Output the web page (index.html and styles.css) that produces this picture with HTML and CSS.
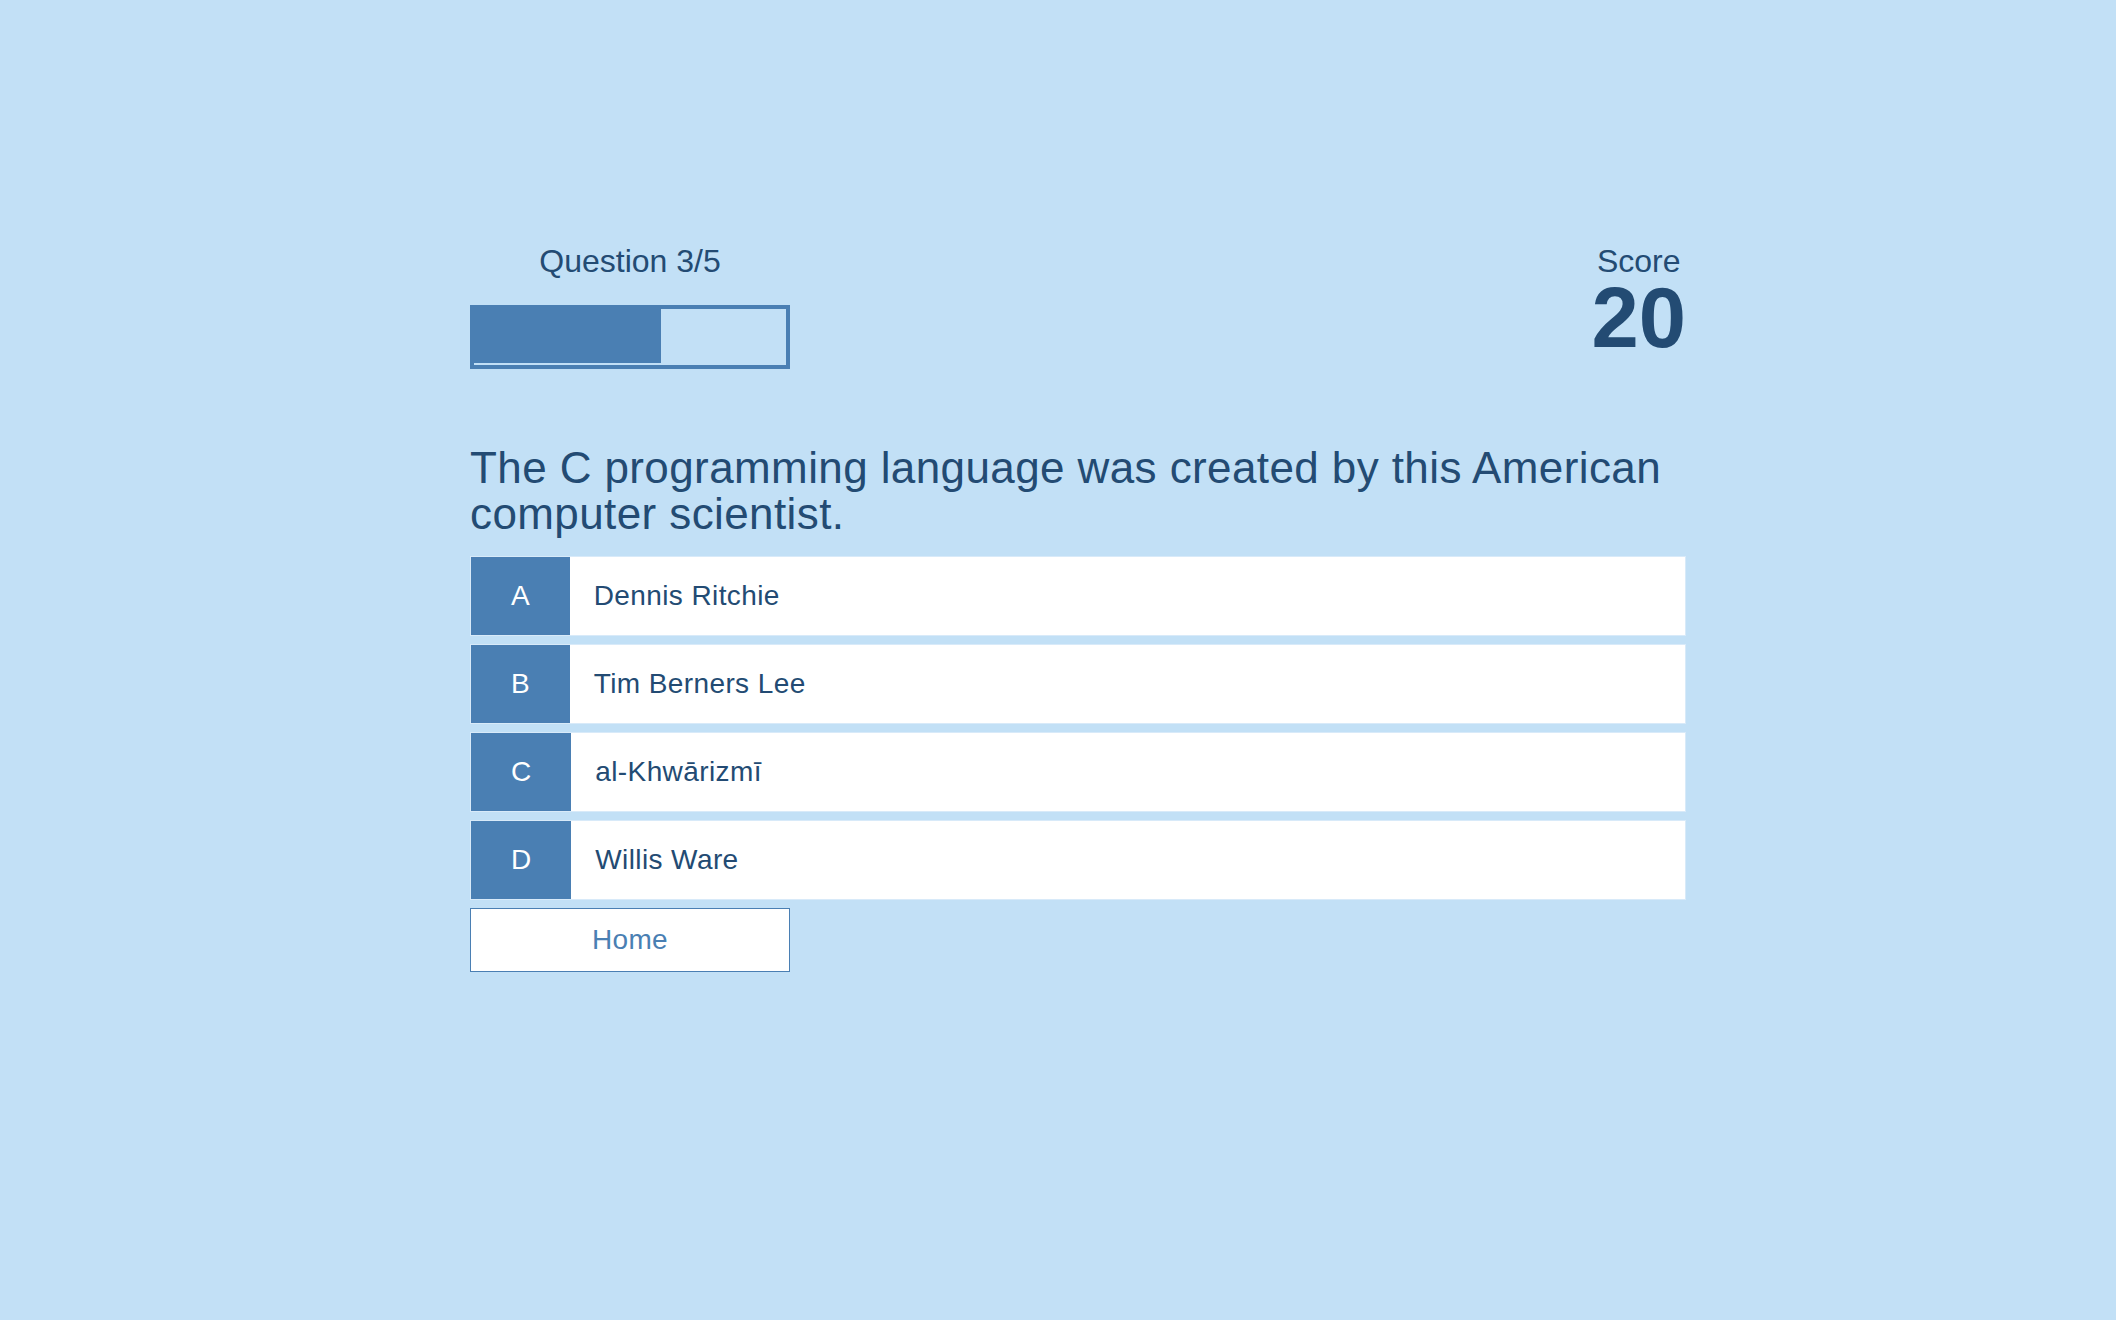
FILE: index.html
```html
<!DOCTYPE html>
<html lang="en">
<head>
<meta charset="utf-8">
<title>Quiz</title>
<link rel="stylesheet" href="styles.css">
</head>
<body>
<main class="quiz">
  <header class="hud">
    <div class="hud-progress">
      <p class="hud-label">Question 3/5</p>
      <div class="bar"><div class="bar-fill" style="width: 60%"></div></div>
    </div>
    <div class="hud-score">
      <p class="hud-label">Score</p>
      <p class="score-value">20</p>
    </div>
  </header>
  <h2 class="question">The C programming language was created by this American computer scientist.</h2>
  <ul class="choices">
    <li class="choice"><span class="choice-letter">A</span><span class="choice-text">Dennis Ritchie</span></li>
    <li class="choice"><span class="choice-letter">B</span><span class="choice-text">Tim Berners Lee</span></li>
    <li class="choice"><span class="choice-letter">C</span><span class="choice-text">al-Khwārizmī</span></li>
    <li class="choice"><span class="choice-letter">D</span><span class="choice-text">Willis Ware</span></li>
  </ul>
  <a class="home-btn" href="#">Home</a>
</main>
</body>
</html>
```
FILE: styles.css
```css
html, body {
  margin: 0;
  padding: 0;
}

body {
  background: #c2e0f6;
  min-height: 1320px;
  font-family: "Liberation Sans", Arial, Helvetica, sans-serif;
  color: #234b73;
}

.quiz {
  width: 1216px;
  margin-left: 470px;
  padding-top: 243px;
}

.hud {
  display: flex;
  justify-content: space-between;
  align-items: flex-start;
}

.hud-progress {
  width: 320px;
  display: flex;
  flex-direction: column;
  align-items: center;
}

.hud-label {
  margin: 0;
  font-size: 32px;
  line-height: 37px;
  color: #234b73;
}

.bar {
  margin-top: 25px;
  width: 320px;
  height: 64px;
  box-sizing: border-box;
  border: 4px solid #4a7fb3;
}

.bar-fill {
  height: 54px;
  background: #4a7fb3;
}

.hud-score {
  display: flex;
  flex-direction: column;
  align-items: center;
}

.score-value {
  margin: 4px 0 0;
  font-size: 85px;
  line-height: 68px;
  font-weight: bold;
  color: #234b73;
}

.question {
  margin: 76px 0 0;
  font-size: 44px;
  line-height: 46px;
  font-weight: normal;
  letter-spacing: 0.4px;
  color: #234b73;
}

.choices {
  list-style: none;
  margin: 19px 0 0;
  padding: 0;
  display: flex;
  flex-direction: column;
  gap: 8px;
}

.choice {
  display: flex;
  height: 80px;
  box-sizing: border-box;
  border: 1px solid #d8eaf9;
  background: #ffffff;
  font-size: 28px;
}

.choice-letter {
  display: flex;
  align-items: center;
  padding: 0 40px;
  background: #4a7fb3;
  color: #ffffff;
}

.choice-text {
  display: flex;
  align-items: center;
  padding-left: 24px;
  letter-spacing: 0.4px;
  color: #234b73;
}

.home-btn {
  display: flex;
  align-items: center;
  justify-content: center;
  margin-top: 8px;
  width: 320px;
  height: 64px;
  box-sizing: border-box;
  border: 1px solid #4a7fb3;
  background: #ffffff;
  color: #4a7fb3;
  font-size: 28px;
  letter-spacing: 0.3px;
  text-decoration: none;
}
```
